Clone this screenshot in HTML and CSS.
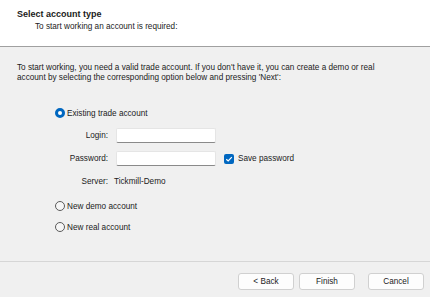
FILE: index.html
```html
<!DOCTYPE html>
<html lang="en">
<head>
    <meta charset="UTF-8">
    <title>Select account type</title>
    <link rel="stylesheet" href="styles.css">
</head>
<body>
    <div class="wizard">
        <div class="header">
            <div class="title">Select account type</div>
            <div class="subtitle">To start working an account is required:</div>
        </div>

        <div class="main">
            <p class="intro">To start working, you need a valid trade account. If you don't have it, you can create a demo or real<br>account by selecting the corresponding option below and pressing 'Next':</p>

            <div class="options">
                <label class="radio-row">
                    <span class="radio checked"></span>
                    <span>Existing trade account</span>
                </label>

                <div class="form">
                    <span class="label">Login:</span>
                    <span class="input"></span>
                    <span></span>

                    <span class="label">Password:</span>
                    <span class="input"></span>
                    <label class="check-row">
                        <span class="checkbox">
                            <svg width="10" height="10" viewBox="0 0 10 10"><path d="M2.3 5.2 L4.2 7 L7.8 3.2" fill="none" stroke="#fff" stroke-width="1.2"/></svg>
                        </span>
                        <span>Save password</span>
                    </label>

                    <span class="label">Server:</span>
                    <span class="value">Tickmill-Demo</span>
                    <span></span>
                </div>

                <label class="radio-row demo">
                    <span class="radio"></span>
                    <span>New demo account</span>
                </label>
                <label class="radio-row real">
                    <span class="radio"></span>
                    <span>New real account</span>
                </label>
            </div>
        </div>

        <div class="footer">
            <button class="button">&lt; Back</button>
            <button class="button">Finish</button>
            <button class="button cancel">Cancel</button>
        </div>
    </div>
</body>
</html>
```
FILE: styles.css
```css
html, body {
    margin: 0;
    padding: 0;
}

body {
    font-family: "Liberation Sans", Arial, sans-serif;
    font-size: 8.2px;
    color: #1b1b1b;
    background-color: #f0f0f0;
}

.wizard {
    width: 430px;
    height: 297px;
    display: flex;
    flex-direction: column;
}

.header {
    background-color: #fff;
    height: 47px;
    box-sizing: border-box;
    padding: 9px 0 0 17px;
    border-bottom: 1px solid #a0a0a0;
    line-height: 11px;
}

.title {
    font-family: "Liberation Sans Narrow", "Liberation Sans", Arial, sans-serif;
    font-weight: bold;
    font-size: 9px;
}

.subtitle {
    padding-left: 18px;
    margin-top: 1px;
}

.main {
    flex: 1;
    padding: 16px 0 0 17px;
}

.intro {
    margin: 0;
    line-height: 10px;
}

.options {
    padding-left: 38px;
    margin-top: 23px;
}

.radio-row {
    display: flex;
    align-items: center;
    height: 14px;
    gap: 2px;
}

.radio {
    width: 8px;
    height: 8px;
    border: 1px solid #5a5a5a;
    border-radius: 50%;
    background-color: #f6f6f6;
}

.radio.checked {
    width: 4px;
    height: 4px;
    border: 3px solid #0067c0;
    background-color: #fff;
}

.form {
    display: grid;
    grid-template-columns: 53px 100px auto;
    column-gap: 8px;
    row-gap: 8px;
    margin-top: 8px;
    align-items: center;
}

.form > * {
    height: 15px;
    display: flex;
    align-items: center;
}

.label {
    justify-content: flex-end;
}

.input {
    background-color: #fff;
    box-sizing: border-box;
    border: 1px solid #e5e5e5;
    border-bottom-color: #8a8a8a;
    border-radius: 2px;
}

.value {
    margin-left: -2px;
}

.check-row {
    gap: 4px;
}

.checkbox {
    width: 10px;
    height: 10px;
    border-radius: 2px;
    background-color: #0067c0;
    display: flex;
}

.demo {
    margin-top: 10px;
}

.real {
    margin-top: 7px;
}

.footer {
    height: 36px;
    box-sizing: border-box;
    border-top: 1px solid #d6d6d6;
    padding: 11px 6px 0 0;
    display: flex;
    justify-content: flex-end;
    align-items: flex-start;
    gap: 5px;
}

.button {
    width: 56px;
    height: 17px;
    font-family: inherit;
    font-size: 8.2px;
    color: #1b1b1b;
    background-color: #fdfdfd;
    border: 1px solid #d0d0d0;
    border-radius: 3px;
    padding: 0;
}

.cancel {
    margin-left: 8px;
}
```
